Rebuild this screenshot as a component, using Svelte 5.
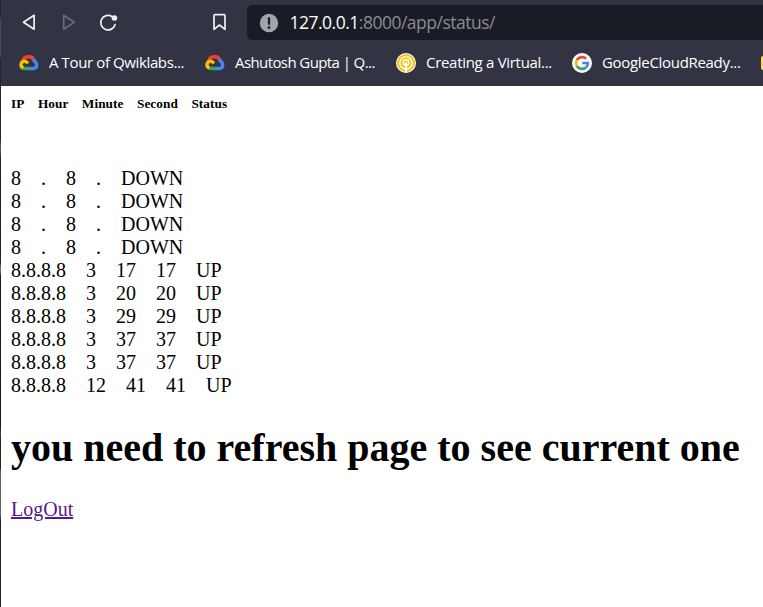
<script>
  const gap = '\u00a0'.repeat(4);
  const down = ['8', '.', '8', '.', 'DOWN'];
  const rows = [
    down, down, down, down,
    ['8.8.8.8', '3', '17', '17', 'UP'],
    ['8.8.8.8', '3', '20', '20', 'UP'],
    ['8.8.8.8', '3', '29', '29', 'UP'],
    ['8.8.8.8', '3', '37', '37', 'UP'],
    ['8.8.8.8', '3', '37', '37', 'UP'],
    ['8.8.8.8', '12', '41', '41', 'UP']
  ];
  const bookmarks = [
    { icon: 'cloud', label: 'A Tour of Qwiklabs...', width: 156, spacing: -0.38 },
    { icon: 'cloud', label: 'Ashutosh Gupta | Q...', width: 161, spacing: -0.59 },
    { icon: 'qwik', label: 'Creating a Virtual...', width: 146, spacing: -0.3 },
    { icon: 'google', label: 'GoogleCloudReady...', width: 159, spacing: -0.31 }
  ];
</script>

<div class="window">
  <div class="edge"></div>
  <div class="browser">
    <header>
      <div class="toolbar">
        <svg class="nav" width="240" height="44" viewBox="0 0 240 44" fill="none" stroke="#f1f1f3" stroke-width="1.7" stroke-linejoin="round" stroke-linecap="round">
          <path d="M34.1 15.3V29.2L23.5 22.3Z" />
          <path d="M63.7 15.3V29.2L74.3 22.3Z" stroke="#696b78" />
          <path d="M112 16.5A7.3 7.3 0 1 0 115.1 24.5" />
          <circle cx="114.4" cy="18" r="2.8" fill="#f1f1f3" stroke="none" />
          <path d="M214 15.7Q214 14.7 215 14.7H224Q225 14.7 225 15.7V29.3L219.5 25L214 29.3Z" />
        </svg>
        <div class="address">
          <svg width="20" height="20" viewBox="0 0 20 20">
            <circle cx="10" cy="10" r="9.2" fill="#a1a4ae" />
            <path d="M10 5V11" stroke="#191c24" stroke-width="2.2" stroke-linecap="round" />
            <circle cx="10" cy="14.6" r="1.4" fill="#191c24" />
          </svg>
          <span class="url"><b>127.0.0.1</b>:8000/app/status/</span>
        </div>
      </div>
      <nav class="bookmarks">
        {#each bookmarks as b}
          <div class="bookmark">
            {#if b.icon === 'cloud'}
              <svg width="20" height="20" viewBox="0 0 20 20" fill="none" stroke-width="3.5">
                <path d="M4 7C5 3.6 7.3 3.7 10 3.7C13 3.7 14.4 5.4 15 7.7" stroke="#ea4335" />
                <path d="M14.1 7.1C18.3 8.8 19.2 15.4 14.5 15.4H10" stroke="#4285f4" />
                <path d="M10.5 15.4H6Q4.6 15.4 3.3 14.7" stroke="#34a853" />
                <path d="M4.3 15C.6 13.1 1.8 8.3 5.6 8.3Q7.3 8.3 9 10.4" stroke="#fbbc05" />
              </svg>
            {:else if b.icon === 'qwik'}
              <svg width="20" height="20" viewBox="0 0 20 20" fill="none">
                <circle cx="10" cy="10" r="10" fill="#fff" />
                <circle cx="10" cy="10" r="9" fill="#f0c419" />
                <circle cx="10" cy="10" r="6.2" stroke="#fff7d2" stroke-width="1.5" />
                <circle cx="10" cy="9.6" r="2.8" stroke="#fff" stroke-width="1.5" />
                <path d="M10 9.5V19.5" stroke="#fff" stroke-width="2" />
              </svg>
            {:else}
              <svg width="20" height="20" viewBox="0 0 20 20" fill="none" stroke-width="2.7">
                <circle cx="10" cy="10" r="10" fill="#fff" />
                <path d="M4.8 7.2A5.9 5.9 0 0 1 14.1 5.8" stroke="#ea4335" />
                <path d="M4.8 7.2A6 6 0 0 0 4.8 12.8" stroke="#fbbc05" />
                <path d="M4.8 12.8A5.9 5.9 0 0 0 13.9 14.4" stroke="#34a853" />
                <path d="M10.2 10H15.9Q15.9 12.8 13.9 14.4" stroke="#4285f4" />
              </svg>
            {/if}
            <span class="label" style:width="{b.width}px" style:letter-spacing="{b.spacing}px">{b.label}</span>
          </div>
        {/each}
        <i class="folder"></i>
      </nav>
    </header>
    <main>
      <h5>{['IP', 'Hour', 'Minute', 'Second', 'Status'].join(gap)}</h5>
      <div class="rows">
        {#each rows as row}
          <div>{row.join(gap)}</div>
        {/each}
      </div>
      <h1>you need to refresh page to see current one</h1>
      <a href="#logout">LogOut</a>
    </main>
  </div>
</div>

<style>
  :global(body) { margin: 0; background: #fff; }
  .window { display: flex; width: 763px; height: 607px; overflow: hidden; }
  .edge { flex: 0 0 1px; background: linear-gradient(#222326 0 15px, #4c4c4e 20px 54px, #242527 60px 140px, #56575a 145px 152px, #242427 158px 262px, #707073 267px 271px, #1e1c20 276px 428px, #434347 433px, #252429 440px 468px, #656568 472px 515px, #242427 520px); }
  .browser { flex: 1; min-width: 0; background: #fff; }
  header { height: 86px; background: #323443; overflow: hidden; }
  .toolbar { display: flex; height: 40px; }
  .nav { flex: none; margin-left: -1px; }
  .address { flex: 1; display: flex; align-items: center; box-sizing: border-box; height: 35px; margin: 5px 0 0 7px; padding-left: 12px; background: #191c24; border-radius: 5px 0 0 5px; }
  .address svg { flex: none; }
  .url { margin-left: 10.5px; padding-bottom: 1px; font: 17.5px/24px "Open Sans", sans-serif; letter-spacing: -0.5px; color: #8b8c90; white-space: nowrap; }
  .url b { font-weight: 400; color: #fff; }
  .bookmarks { display: flex; align-items: center; height: 46px; padding-left: 18px; }
  .bookmark { display: flex; flex: none; align-items: center; }
  .bookmark svg { flex: none; }
  .label { margin-left: 10px; padding-bottom: 2px; font: 15px/22px "Open Sans", sans-serif; color: #fff; white-space: nowrap; }
  .folder { flex: none; width: 20px; height: 14px; border-radius: 2px; background: #ffd365; }
  main { padding: 10px 10px 0; font: 20px/23px "Liberation Serif", "Times New Roman", serif; color: #000; }
  h5 { margin: 0 0 55px; font-size: 13.28px; line-height: 16px; letter-spacing: 0.06px; white-space: nowrap; }
  .rows { white-space: nowrap; }
  h1 { margin: 28px 0 27px; font-size: 40px; line-height: 46px; white-space: nowrap; }
  a { color: #551a8b; text-decoration: underline; text-decoration-thickness: 2px; }
</style>
